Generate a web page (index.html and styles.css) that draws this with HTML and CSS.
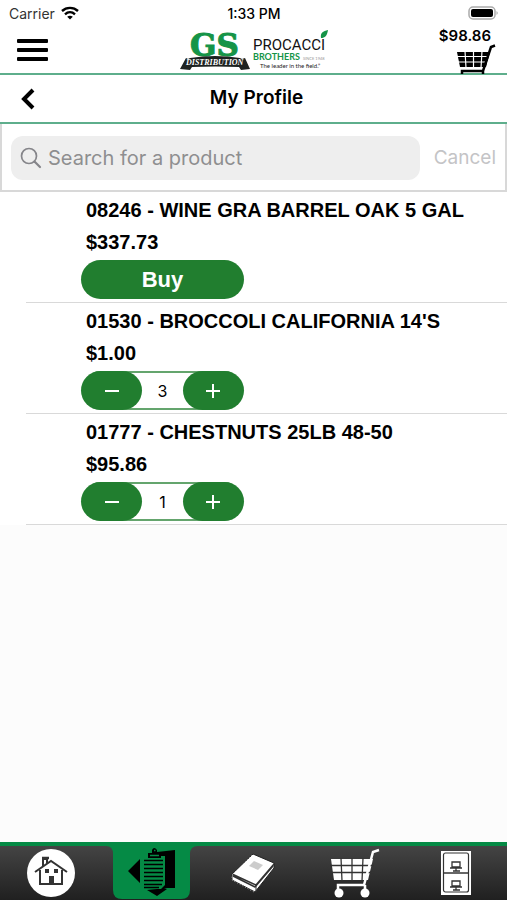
FILE: index.html
```html
<!DOCTYPE html>
<html lang="en">
<head>
<meta charset="utf-8">
<meta name="viewport" content="width=device-width, initial-scale=1">
<title>My Profile</title>
<link rel="stylesheet" href="styles.css">
</head>
<body>
<div class="app">
  <div class="status">
    <div class="carrier">Carrier
      <svg width="18" height="14" viewBox="0 0 18 14" fill="none" stroke="#000" stroke-width="2.4" aria-hidden="true"><path d="M1 5C5.500.8 12.500.8 17 5M4 8.300c3-2.700 7-2.700 10 0"/><path d="M9 13.500 6.200 10.700c1.700-1.400 3.900-1.400 5.600 0z" fill="#000" stroke="none"/></svg>
    </div>
    <div class="time">1:33 PM</div>
    <svg class="battery" width="31" height="15" viewBox="0 0 31 15" aria-hidden="true"><rect x="1" y="1" width="26" height="12" rx="4" fill="#fff" stroke="#aaa" stroke-width="1.500"/><rect x="3" y="3" width="22" height="8" rx="2"/><path d="M28.500 5q2.500 2 0 4z" fill="#aaa"/></svg>
  </div>
  <header class="header">
    <button class="menu" type="button" aria-label="Menu"><span></span><span></span><span></span></button>
    <svg class="logo" width="148" height="42" viewBox="0 0 148 42" role="img" aria-label="GS Distribution, Procacci Brothers">
      <text x="10" y="26" class="gs">GS</text>
      <path d="M10 28Q35 24 60 28l2 1 3-1 5 11-9 1-2-3Q35 36 12 37l-2 3-10-1 6-11 2 1z" fill="#1d2221"/>
      <text x="6" y="35" class="dist">DISTRIBUTION</text>
      <text x="73" y="20" class="procacci">PROCACCI</text>
      <path d="M141 8c-1-5 2-7 7-8-1 6-3 8-7 8z" fill="#159447"/>
      <text x="73" y="30" class="brothers">BROTHERS</text>
      <text x="123" y="30" class="since">SINCE 1948</text>
      <text x="80" y="38" class="tagline">The leader in the field.”</text>
    </svg>
    <a class="basket" href="#cart" aria-label="Cart, $98.86">
      <span class="total">$98.86</span>
      <svg width="40" height="30" viewBox="0 0 40 30" fill="none" stroke="#000" aria-hidden="true"><path d="M1 8h33l-4 15H4z" fill="#000" stroke="none"/><path d="M0 12.500h34M0 18h34M9 7l1 17M17.500 7v17M26 7l-1 17" stroke="#fff" stroke-width="1.200"/><path d="M39 1.500l-4 1.500-8 24H6v3M27 27v3" stroke-width="2.500"/></svg>
    </a>
  </header>
  <div class="titlebar">
    <button class="back" type="button" aria-label="Back"><svg width="16" height="22" viewBox="0 0 16 22" fill="none" stroke="#000" stroke-width="4" aria-hidden="true"><path d="M13 2 4 11l9 9"/></svg></button>
    <h1>My Profile</h1>
  </div>
  <form class="search">
    <label class="field">
      <svg width="22" height="22" viewBox="0 0 22 22" fill="none" stroke="#85858a" stroke-width="1.700" stroke-linecap="round" aria-hidden="true"><circle cx="9" cy="9" r="7.500"/><path d="M14.500 14.500 20 20" stroke-width="2.200"/></svg>
      <input type="text" placeholder="Search for a product" aria-label="Search for a product">
    </label>
    <button class="cancel" type="button">Cancel</button>
  </form>
  <main class="list">
    <article class="item">
      <h2>08246 - WINE GRA BARREL OAK 5 GAL</h2>
      <p>$337.73</p>
      <button class="buy" type="button">Buy</button>
    </article>
    <article class="item">
      <h2>01530 - BROCCOLI CALIFORNIA 14'S</h2>
      <p>$1.00</p>
      <div class="stepper">
        <button type="button" aria-label="Decrease"><svg width="16" height="16" viewBox="0 0 16 16"><path d="M1 8h14"/></svg></button>
        <span>3</span>
        <button type="button" aria-label="Increase"><svg width="16" height="16" viewBox="0 0 16 16"><path d="M1 8h14M8 1v14"/></svg></button>
      </div>
    </article>
    <article class="item">
      <h2>01777 - CHESTNUTS 25LB 48-50</h2>
      <p>$95.86</p>
      <div class="stepper">
        <button type="button" aria-label="Decrease"><svg width="16" height="16" viewBox="0 0 16 16"><path d="M1 8h14"/></svg></button>
        <span>1</span>
        <button type="button" aria-label="Increase"><svg width="16" height="16" viewBox="0 0 16 16"><path d="M1 8h14M8 1v14"/></svg></button>
      </div>
    </article>
  </main>
  <nav class="tabs">
    <a href="#home" aria-label="Home">
      <svg width="50" height="50" viewBox="0 0 50 50"><circle cx="25" cy="25" r="24" fill="#fff"/><g fill="none" stroke="#333" stroke-width="2"><path d="M9 24 25 13l16 11M14 22v14h22V22M17 18v-7h4v4"/><path d="M16 10h7" stroke-width="2.500"/></g><path d="M19 21h4v4h-4zM28 21h4v4h-4zM23 28h5v8h-5z" fill="#333"/></svg>
    </a>
    <a href="#orders" class="active" aria-label="Orders" aria-current="page">
      <svg width="92" height="54" viewBox="0 0 92 54"><path d="M0 0h92q-8 0-8 8v36q0 9-9 9H16q-9 0-9-9V8Q7 0 0 0z" fill="#058a45"/><path d="M51 6l18-2v38H58l3 1-10 7-10-6 10-1zM22 25l12-12v24z"/><path d="M36 10h23v29l-4 4H36z" fill="#058a45"/><path d="M38 14.500h19M38 18.500h19M38 22.500h19M38 26.500h19M38 30.500h19M38 34.500h19M38 38.500h18M38 41.500h15" stroke="#000" stroke-width="1.300"/><path d="M42 7h4V4q2-4 5 0v3h4v5H42z"/><path d="M44 9.500h9M48 4.500h1.500" stroke="#058a45" stroke-width="1.500"/></svg>
    </a>
    <a href="#catalog" aria-label="Catalog">
      <svg width="46" height="44" viewBox="0 0 46 44" stroke-linejoin="round"><path d="M23 3 44 12v5L25 41 2 29v-6z" fill="#fff" stroke="#222" stroke-width="1"/><path d="M2 23l24 11 18-21M3 25l22 11 18-21" fill="none" stroke="#333" stroke-width="1.500"/><path d="M26 34v7" stroke="#333"/><path d="M22 4 2 24v5l22 12" fill="none" stroke="#aaa" stroke-dasharray="1 2"/><path d="m24 10 9 4-5 5-9-4z" fill="#ccc"/></svg>
    </a>
    <a href="#cart" aria-label="Cart">
      <svg width="50" height="50" viewBox="0 0 50 50" fill="none" stroke="#fff"><path d="M1 11h42l-5 21H4z" fill="#fff" stroke="none"/><path d="M0 17.500h44M0 24.500h44M11 10l1 23M22 10v23M33 10l-1 23" stroke="#333" stroke-width="1.300"/><path d="M49 2l-6 2-9 33H8v6M35 37v6" stroke-width="2.500"/><circle cx="9" cy="45" r="4.500" fill="#fff" stroke="none"/><circle cx="35" cy="45" r="4.500" fill="#fff" stroke="none"/></svg>
    </a>
    <a href="#files" aria-label="Files">
      <svg width="30" height="46" viewBox="0 0 30 46"><path d="M0 1h30v44H0z" fill="#fff"/><rect x="2.500" y="3" width="25" height="39" rx="2" fill="none" stroke="#333" stroke-width="1.200"/><path d="M2 23h26" stroke="#333" stroke-width="1.500"/><g fill="none" stroke="#333" stroke-width="1.300"><path d="M11 12h8v5h-8zM9 18h12M15 18v3M12 21h7M11 31h8v5h-8zM9 37h12M15 37v3M12 40h7"/></g></svg>
    </a>
  </nav>
</div>
</body>
</html>
```
FILE: styles.css
```css
* { box-sizing: border-box; }
body {
  margin: 0;
  background: #fcfcfc;
  color: #000;
  font-family: Inter, "Liberation Sans", sans-serif;
}
button {
  border: 0;
  padding: 0;
  background: none;
  color: inherit;
  font: inherit;
}
svg { display: block; flex: none; }
h1, h2, p { margin: 0; }
.app {
  min-height: 100vh;
  display: flex;
  flex-direction: column;
}
.status, .header {
  display: grid;
  grid-template-columns: 1fr auto 1fr;
  background: #fff;
}
.status {
  height: 28px;
  align-items: center;
  padding: 0 8px 2px 9px;
  font-size: 14px;
}
.carrier { display: flex; align-items: center; gap: 6px; color: #333; }
.time { font-weight: 500; }
.battery { justify-self: end; }
.header {
  height: 47px;
  align-items: start;
  padding: 0 11px;
  border-bottom: 2px solid #5eae8c;
}
.menu {
  width: 31px;
  margin-left: 6px;
  padding-top: 11px;
  display: grid;
  gap: 5px;
}
.menu span { height: 4px; border-radius: 1px; background: #000; }
.logo { margin-top: 2px; overflow: visible; }
.gs { font: bold 31px "DejaVu Serif", serif; fill: #159447; stroke: #159447; stroke-width: 1px; }
.dist { font: italic bold 8px "Liberation Serif", serif; fill: #fff; }
.procacci { font: 15px Roboto, sans-serif; fill: #111; }
.brothers { font: bold 9px Lato, sans-serif; fill: #159447; }
.since { font: 4px Lato, sans-serif; fill: #999; }
.tagline { font: 6px Lato, sans-serif; fill: #222; }
.basket {
  justify-self: end;
  display: flex;
  flex-direction: column;
  align-items: flex-end;
  color: #000;
  text-decoration: none;
}
.total {
  padding-right: 5px;
  font-size: 15px;
  line-height: 16px;
  font-weight: 600;
}
.titlebar {
  height: 49px;
  display: grid;
  grid-template-columns: 1fr auto 1fr;
  align-items: center;
  padding: 0 14px 0 20px;
  background: #fff;
  border-bottom: 2px solid #5eae8c;
}
.titlebar h1 { font-size: 19px; line-height: 24px; font-weight: 600; padding-bottom: 2px; }
.back { justify-self: start; }
.search {
  display: flex;
  align-items: center;
  gap: 14px;
  height: 68px;
  padding: 1px 9px 0;
  background: #fff;
  border: 2px solid #d8d8d8;
  border-top: 0;
}
.field {
  flex: 1;
  min-width: 0;
  height: 44px;
  display: flex;
  align-items: center;
  gap: 6px;
  padding: 0 9px;
  border-radius: 12px;
  background: #eee;
}
.field input {
  flex: 1;
  min-width: 0;
  border: 0;
  padding: 0;
  background: none;
  outline: 0;
  font: 20px Inter, sans-serif;
}
.field input::placeholder { color: #8e8e90; opacity: 1; }
.cancel { font-size: 19px; color: #c4c4c6; }
.list { flex: 1; }
.item {
  height: 111px;
  padding: 2px 0 0 81px;
  background: linear-gradient(#d9d9d9, #d9d9d9) 26px 100% / 100% 1px no-repeat #fff;
  font-family: "Liberation Sans", sans-serif;
}
.item h2, .item p {
  padding-left: 5px;
  font-size: 20px;
  line-height: 32px;
  font-weight: bold;
}
.buy, .stepper {
  width: 163px;
  height: 39px;
  margin-top: 2px;
  border-radius: 20px;
}
.buy {
  display: block;
  background: #217e2f;
  color: #fff;
  font-size: 22px;
  font-weight: bold;
}
.stepper {
  display: flex;
  align-items: center;
  justify-content: space-between;
  background: linear-gradient(#64a56d, #64a56d) 0 0 / 100% 2px no-repeat, linear-gradient(#64a56d, #64a56d) 0 100% / 100% 2px no-repeat;
  font: 16px Inter, sans-serif;
}
.stepper button {
  width: 61px;
  height: 39px;
  display: grid;
  place-items: center;
  border-radius: 20px;
  background: #217e2f;
}
.stepper path { stroke: #fff; stroke-width: 2; }
.tabs {
  height: 58px;
  display: grid;
  grid-template-columns: repeat(5, 1fr);
  border-top: 4px solid #058a45;
  background: linear-gradient(#444, #202020);
}
.tabs a { display: grid; place-items: center; }
.tabs .active { place-items: start center; }
```
